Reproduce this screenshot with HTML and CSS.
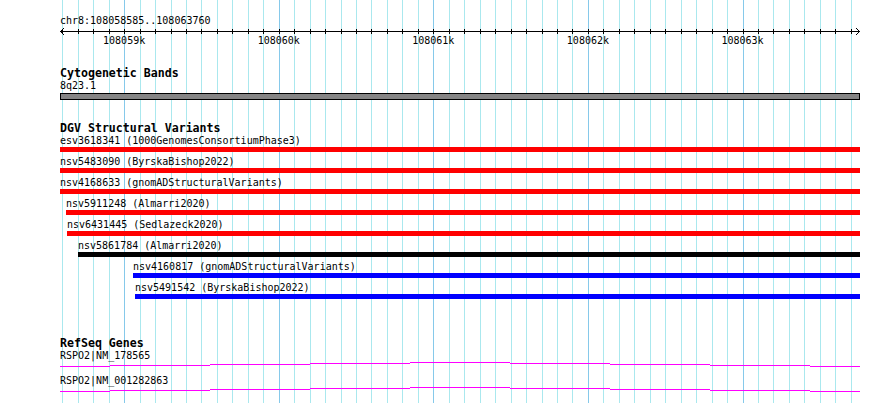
FILE: index.html
```html
<!DOCTYPE html>
<html lang="en">

<head>
    <meta charset="UTF-8">
    <meta name="viewport" content="width=device-width, initial-scale=1.0">
    <title>chr8:108058585..108063760</title>
    <link rel="stylesheet" href="styles.css">
</head>

<body>
    <div class="browser">
        <svg id="gridlines" class="gridlines" width="890" height="403"></svg>

        <div class="tracks">
            <div class="location">chr8:108058585..108063760</div>
            <svg id="scale" class="scale" width="800" height="20">
                <line class="scale-line" x1="0" y1="4.5" x2="800" y2="4.5" />
                <polyline class="scale-line" points="4,1 0.5,4.5 4,8" />
                <polyline class="scale-line" points="796,1 799.5,4.5 796,8" />
            </svg>

            <section class="track cyto">
                <div class="track-title">Cytogenetic Bands</div>
                <div class="band-label">8q23.1</div>
                <div class="band"></div>
            </section>

            <section class="track dgv">
                <div class="track-title">DGV Structural Variants</div>
                <div class="feature">
                    <div class="feature-label">esv3618341 (1000GenomesConsortiumPhase3)</div>
                    <div class="feature-bar loss"></div>
                </div>
                <div class="feature">
                    <div class="feature-label">nsv5483090 (ByrskaBishop2022)</div>
                    <div class="feature-bar loss"></div>
                </div>
                <div class="feature">
                    <div class="feature-label">nsv4168633 (gnomADStructuralVariants)</div>
                    <div class="feature-bar loss"></div>
                </div>
                <div class="feature" style="margin-left: 6px">
                    <div class="feature-label">nsv5911248 (Almarri2020)</div>
                    <div class="feature-bar loss"></div>
                </div>
                <div class="feature" style="margin-left: 7px">
                    <div class="feature-label">nsv6431445 (Sedlazeck2020)</div>
                    <div class="feature-bar loss"></div>
                </div>
                <div class="feature" style="margin-left: 18px">
                    <div class="feature-label">nsv5861784 (Almarri2020)</div>
                    <div class="feature-bar complex"></div>
                </div>
                <div class="feature" style="margin-left: 73px">
                    <div class="feature-label">nsv4160817 (gnomADStructuralVariants)</div>
                    <div class="feature-bar gain"></div>
                </div>
                <div class="feature" style="margin-left: 75px">
                    <div class="feature-label">nsv5491542 (ByrskaBishop2022)</div>
                    <div class="feature-bar gain"></div>
                </div>
            </section>

            <section class="track refseq">
                <div class="track-title">RefSeq Genes</div>
                <div class="gene">
                    <div class="gene-label">RSPO2|NM_178565</div>
                    <svg class="gene-line" width="800" height="13"></svg>
                </div>
                <div class="gene">
                    <div class="gene-label">RSPO2|NM_001282863</div>
                    <svg class="gene-line" width="800" height="13"></svg>
                </div>
            </section>
        </div>
    </div>

    <script>
        const SVG = 'http://www.w3.org/2000/svg';
        const start = 108058585, end = 108063760;
        const offset = 60, width = 800;
        const px = b => (b - start) * width / (end - start);

        function add(parent, tag, attrs) {
            const el = document.createElementNS(SVG, tag);
            for (const k in attrs) el.setAttribute(k, attrs[k]);
            parent.appendChild(el);
            return el;
        }

        // grid lines and ruler ticks every 100bp
        const grid = document.getElementById('gridlines');
        const scale = document.getElementById('scale');
        for (let b = 108058600; b <= 108063700; b += 100) {
            const x = Math.round(px(b)) + 0.5;
            const major = b % 1000 === 0;
            add(grid, 'line', {
                x1: x + offset, y1: 0, x2: x + offset, y2: 403,
                class: major ? 'gridline major' : 'gridline'
            });
            add(scale, 'line', { x1: x, y1: 2, x2: x, y2: 7, class: 'scale-line' });
            if (major) {
                const t = add(scale, 'text', { x: px(b), y: 17, class: 'scale-label' });
                t.textContent = (b / 1000) + 'k';
            }
        }

        // intron hat: one pixel step every 100px, highest in the middle
        document.querySelectorAll('.gene-line').forEach(svg => {
            const steps = [[0, 50, 4], [50, 150, 3], [150, 250, 2], [250, 350, 1], [350, 450, 0],
                [450, 550, 1], [550, 650, 2], [650, 750, 3], [750, 800, 4]];
            steps.forEach(([x1, x2, y]) => {
                add(svg, 'line', { x1: x1, y1: y + 0.5, x2: x2, y2: y + 0.5, class: 'intron' });
            });
        });
    </script>
</body>

</html>
```

FILE: styles.css
```css
body {
    margin: 0;
    background-color: #fff;
}

.browser {
    position: relative;
    width: 890px;
    height: 403px;
    overflow: hidden;
    font-family: "DejaVu Sans Mono", monospace;
    font-size: 10px;
    line-height: 12px;
    color: #000;
}

.gridlines {
    position: absolute;
    top: 0;
    left: 0;
}

.gridline {
    stroke: #aae8ee;
    stroke-width: 1;
}

.gridline.major {
    stroke: #86c9ea;
}

.tracks {
    position: relative;
    margin-left: 60px;
    width: 800px;
}

.location {
    padding-top: 15px;
}

.scale {
    display: block;
    overflow: visible;
}

.scale-line {
    stroke: #000;
    stroke-width: 1;
    fill: none;
}

.scale-label {
    font-family: "DejaVu Sans Mono", monospace;
    font-size: 10px;
    text-anchor: middle;
    fill: #000;
}

.track-title {
    font-weight: bold;
    font-size: 11.6px;
    line-height: 13px;
}

.cyto .track-title {
    margin-top: 20px;
}

.band {
    height: 5px;
    margin-top: 1px;
    border: 1px solid #000;
    background-color: #858585;
}

.dgv .track-title {
    margin-top: 22px;
}

.feature {
    margin-bottom: 4px;
}

.feature-bar {
    height: 5px;
}

.feature-bar.loss {
    background-color: #ff0000;
}

.feature-bar.complex {
    background-color: #000;
}

.feature-bar.gain {
    background-color: #0000ff;
}

.refseq .track-title {
    margin-top: 38px;
}

.gene-line {
    display: block;
}

.intron {
    stroke: #ff00ff;
    stroke-width: 1;
}
```
